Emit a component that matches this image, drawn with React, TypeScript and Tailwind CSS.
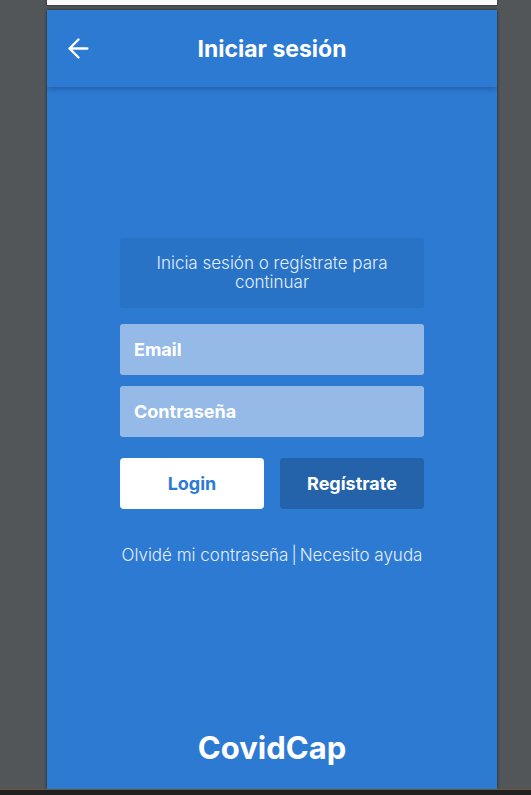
import { useState } from "react";

function Header() {
  return (
    <header className="flex h-[77px] shrink-0 items-center px-5 shadow-[0_2px_5px_rgba(0,0,0,0.22)]">
      <button type="button" aria-label="Volver" className="w-6 text-white">
        <svg
          viewBox="0 0 24 24"
          className="h-6 w-6"
          fill="none"
          stroke="currentColor"
          strokeWidth="2.4"
          strokeLinecap="round"
          strokeLinejoin="round"
        >
          <path d="M20.3 11.5H2.5M11.5 2.5l-9 9 9 9" />
        </svg>
      </button>
      <h1 className="flex-1 pr-6 text-center text-[23px] leading-7 font-bold">Iniciar sesión</h1>
    </header>
  );
}

function LoginForm() {
  const [email, setEmail] = useState("");
  const [password, setPassword] = useState("");
  const field =
    "block h-[51px] w-full rounded-[3px] bg-[#96bae8] px-3.5 text-lg font-bold text-white outline-none placeholder:text-white placeholder:opacity-100";

  return (
    <form className="mx-auto w-full max-w-[304px]" onSubmit={(event) => event.preventDefault()}>
      <p className="rounded-[3px] bg-[#2973c7] px-7 py-4 text-center text-[17px] leading-[19px] font-light text-[#e4eefa]">
        Inicia sesión o regístrate para continuar
      </p>
      <div className="mt-4 grid gap-[11px]">
        <input
          type="email"
          aria-label="Email"
          placeholder="Email"
          value={email}
          onChange={(event) => setEmail(event.target.value)}
          className={field}
        />
        <input
          type="password"
          aria-label="Contraseña"
          placeholder="Contraseña"
          value={password}
          onChange={(event) => setPassword(event.target.value)}
          className={field}
        />
      </div>
      <div className="mt-[21px] grid grid-cols-2 gap-4 text-lg font-bold">
        <button type="submit" className="h-[51px] rounded-[4px] bg-white text-[#2d7ad3]">
          Login
        </button>
        <button type="button" className="h-[51px] rounded-[4px] bg-[#2462a9] text-white">
          Regístrate
        </button>
      </div>
      <nav className="mt-[34px] flex justify-center gap-[3px] text-[17px] leading-6 font-light whitespace-nowrap text-[#e4eefa]">
        <a href="#recuperar">Olvidé mi contraseña</a>
        <span>|</span>
        <a href="#ayuda">Necesito ayuda</a>
      </nav>
    </form>
  );
}

export default function App() {
  return (
    <div className="flex min-h-screen flex-col bg-[#525659] font-[Inter,'Open_Sans',sans-serif]">
      <div className="flex flex-1 flex-col overflow-hidden pr-[34px] pl-[47px]">
        <div className="mb-[5px] h-[5px] shrink-0 bg-[#fafafa] shadow-[0_0_3px_rgba(0,0,0,0.6)]" />
        <div className="flex flex-1 flex-col shadow-[0_0_3px_rgba(0,0,0,0.6)]">
          <main className="flex flex-1 flex-col overflow-hidden bg-[#2d7ad3] text-white">
            <Header />
            <div className="flex flex-1 flex-col justify-between px-5 pt-[151px] pb-[21px]">
              <LoginForm />
              <footer className="text-center text-[31px] leading-10 font-bold">CovidCap</footer>
            </div>
          </main>
        </div>
      </div>
      <div className="h-[6px] shrink-0 border-t border-[#6b5b35] bg-[#202020]" />
    </div>
  );
}
